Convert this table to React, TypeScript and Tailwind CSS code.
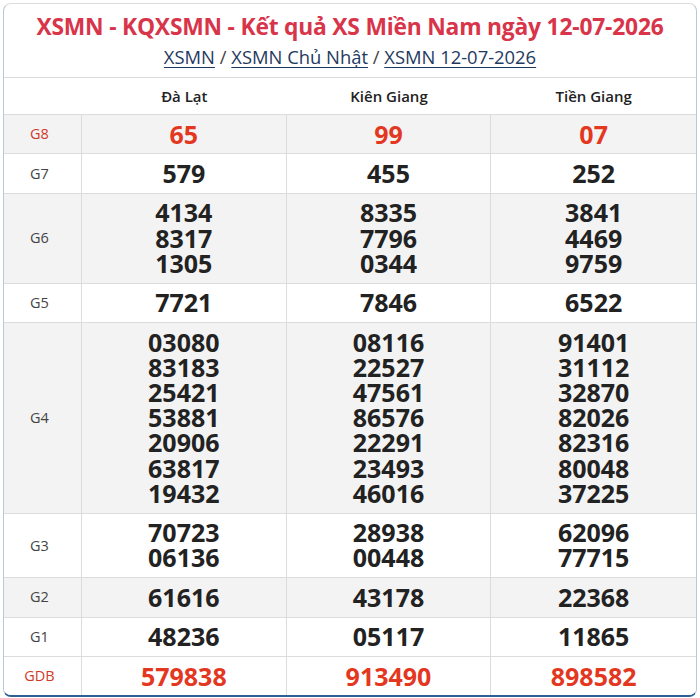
const provinces = ["Đà Lạt", "Kiên Giang", "Tiền Giang"];

type Row = { label: string; values: string[][]; red?: boolean; shaded?: boolean };

const rows: Row[] = [
  { label: "G8", red: true, shaded: true, values: [["65"], ["99"], ["07"]] },
  { label: "G7", values: [["579"], ["455"], ["252"]] },
  {
    label: "G6",
    shaded: true,
    values: [
      ["4134", "8317", "1305"],
      ["8335", "7796", "0344"],
      ["3841", "4469", "9759"],
    ],
  },
  { label: "G5", values: [["7721"], ["7846"], ["6522"]] },
  {
    label: "G4",
    shaded: true,
    values: [
      ["03080", "83183", "25421", "53881", "20906", "63817", "19432"],
      ["08116", "22527", "47561", "86576", "22291", "23493", "46016"],
      ["91401", "31112", "32870", "82026", "82316", "80048", "37225"],
    ],
  },
  {
    label: "G3",
    values: [
      ["70723", "06136"],
      ["28938", "00448"],
      ["62096", "77715"],
    ],
  },
  { label: "G2", shaded: true, values: [["61616"], ["43178"], ["22368"]] },
  { label: "G1", values: [["48236"], ["05117"], ["11865"]] },
  { label: "GDB", red: true, values: [["579838"], ["913490"], ["898582"]] },
];

export default function App() {
  return (
    <div className="bg-white w-[700px] h-[698px] pt-[3px] px-[3px] font-['Open_Sans',sans-serif]">
      <div className="rounded-lg border border-[#dcdcdc] border-b-[2px] border-b-[#2c5f93] border-l-[#b9c8d8] border-r-[#b9c8d8] overflow-hidden bg-white">
        {/* Heading */}
        <div className="text-center pt-[9px] pb-[8px]">
          <h1 className="text-[22.8px] leading-[28px] font-bold text-[#d8344a] tracking-[-0.2px]">
            XSMN - KQXSMN - Kết quả XS Miền Nam ngày 12-07-2026
          </h1>
          <div className="mt-[3px] text-[18.4px] leading-[25px] text-[#444]">
            <a className="text-[#1f3a60] underline underline-offset-[3px]">XSMN</a>
            <span> / </span>
            <a className="text-[#1f3a60] underline underline-offset-[3px]">XSMN Chủ Nhật</a>
            <span> / </span>
            <a className="text-[#1f3a60] underline underline-offset-[3px]">XSMN 12-07-2026</a>
          </div>
        </div>

        {/* Results table */}
        <div className="border-t border-[#dcdcdc]">
          <div className="grid grid-cols-[78px_1fr_1fr_1fr] border-b border-[#dcdcdc]">
            <div />
            {provinces.map((p) => (
              <div key={p} className="text-center text-[15px] font-semibold text-[#222] leading-[20px] pt-[8px] pb-[8px]">
                {p}
              </div>
            ))}
          </div>
          {rows.map((r, i) => (
            <div
              key={r.label}
              className={`grid grid-cols-[78px_1fr_1fr_1fr] ${i < rows.length - 1 ? "border-b border-[#dcdcdc]" : ""} ${r.shaded ? "bg-[#f3f3f3]" : "bg-white"}`}
            >
              <div
                className={`flex items-center justify-center pr-[6px] text-[14.5px] border-r border-[#dcdcdc] ${r.red ? "text-[#cf3b2b]" : "text-[#444]"}`}
              >
                {r.label}
              </div>
              {r.values.map((col, j) => (
                <div
                  key={j}
                  className={`flex flex-col items-center justify-center py-[6.6px] ${j < 2 ? "border-r border-[#dcdcdc]" : ""}`}
                >
                  {col.map((n) => (
                    <div
                      key={n}
                      className={`text-[25px] leading-[25.2px] font-bold ${r.red ? "text-[#e3381f]" : "text-[#222]"}`}
                    >
                      {n}
                    </div>
                  ))}
                </div>
              ))}
            </div>
          ))}
        </div>
      </div>
    </div>
  );
}
